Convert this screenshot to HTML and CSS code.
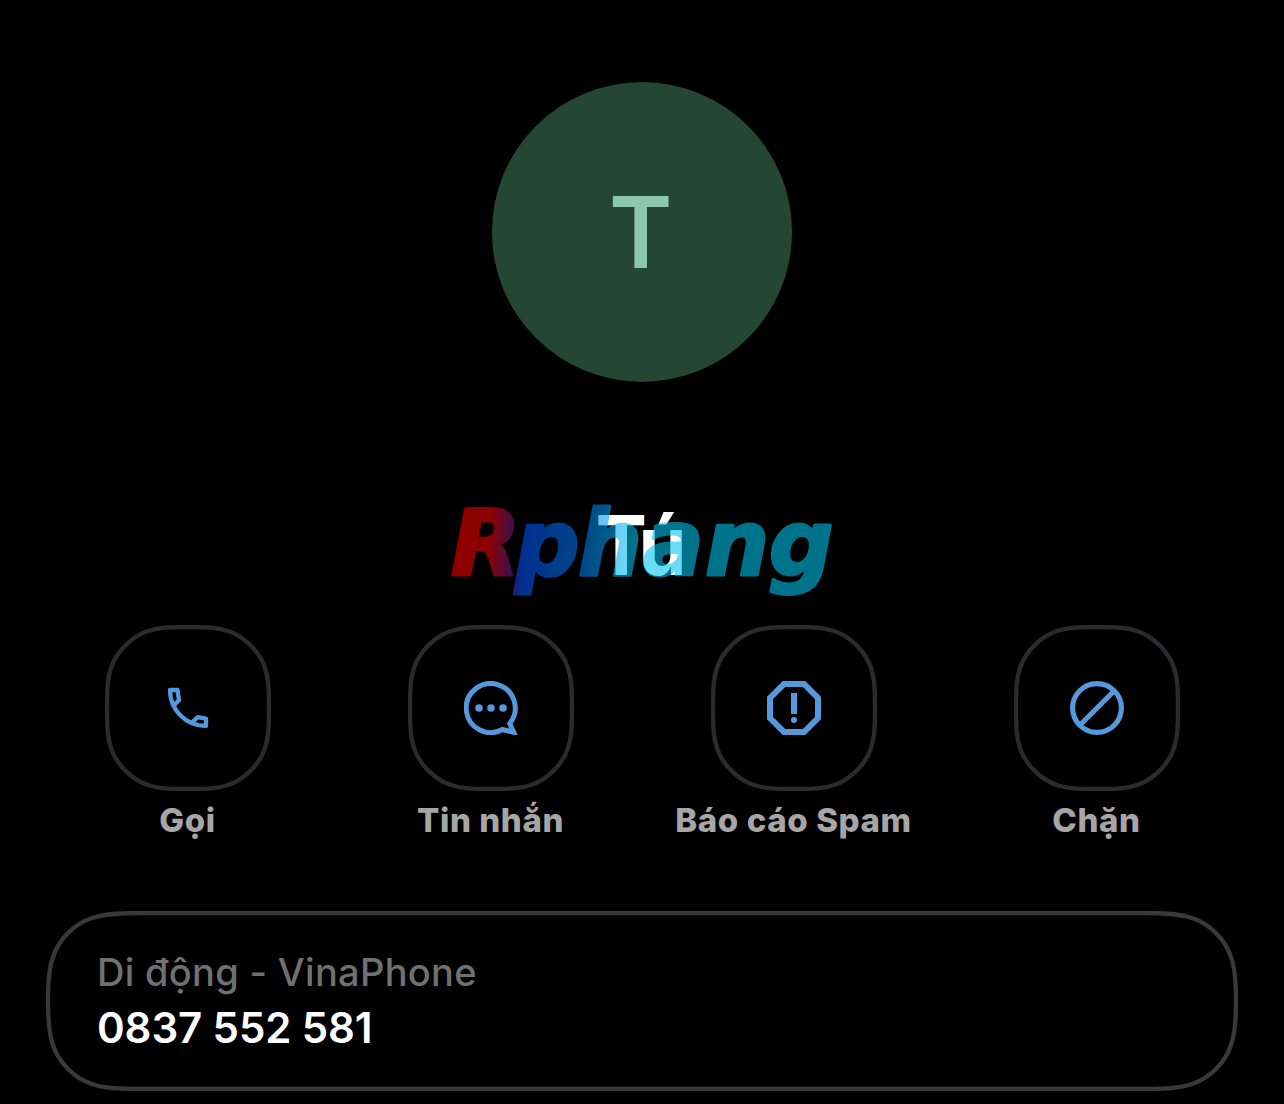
FILE: index.html
```html
<!DOCTYPE html>
<html lang="vi">
<head>
    <meta charset="utf-8">
    <title>Tú</title>
    <link rel="stylesheet" href="styles.css">
</head>

<body>
    <svg width="0" height="0" class="defs">
        <symbol id="frame" viewBox="0 0 166 166">
            <path d="M83 2C106 2 114 3 123 6C139 11 155 27 160 43C163 52 164 60 164 83C164 106 163 114 160 123C155 139 139 155 123 160C114 163 106 164 83 164C60 164 52 163 43 160C27 155 11 139 6 123C3 114 2 106 2 83C2 60 3 52 6 43C11 27 27 11 43 6C52 3 60 2 83 2Z"/>
        </symbol>
    </svg>

    <div class="contact">
        <div class="avatar"><span>T</span></div>

        <div class="name-area">
            <h1 class="name">Tú</h1>
            <svg class="watermark" width="400" height="110" viewBox="0 0 400 110">
                <defs>
                    <linearGradient id="brand" gradientUnits="userSpaceOnUse" x1="10" y1="40" x2="390" y2="70">
                        <stop offset="0" stop-color="#f40000"/>
                        <stop offset="0.1" stop-color="#f40000"/>
                        <stop offset="0.17" stop-color="#5a1e9c"/>
                        <stop offset="0.19" stop-color="#0053f8"/>
                        <stop offset="0.34" stop-color="#0078ec"/>
                        <stop offset="0.48" stop-color="#00c6f1"/>
                        <stop offset="1" stop-color="#00c6f1"/>
                    </linearGradient>
                </defs>
                <text x="9 73 136 201 263 327" y="82.500" fill="url(#brand)" stroke="url(#brand)">Rphang</text>
            </svg>
        </div>

        <div class="actions">
            <div class="action">
                <div class="action-button">
                    <svg class="frame"><use href="#frame"/></svg>
                    <svg class="icon" width="54" height="54" viewBox="0 0 54 54">
                        <path class="line" stroke-width="4.300" stroke-linejoin="round" d="M12 25.300L18 19L16.500 9H9C9 29 25 45 45 45V37.600L36.500 36.200L30.500 42"/>
                    </svg>
                </div>
                <span class="label">Gọi</span>
            </div>
            <div class="action">
                <div class="action-button">
                    <svg class="frame"><use href="#frame"/></svg>
                    <svg class="icon" width="54" height="54" viewBox="0 0 54 54">
                        <path class="line" stroke-width="5" d="M38.500 48.500A24.500 24.500 0 1 1 45.700 42.500L49.600 51.200Z"/>
                        <circle class="dot" cx="15" cy="27" r="3.800"/>
                        <circle class="dot" cx="27" cy="27" r="3.800"/>
                        <circle class="dot" cx="39" cy="27" r="3.800"/>
                    </svg>
                </div>
                <span class="label">Tin nhắn</span>
            </div>
            <div class="action">
                <div class="action-button">
                    <svg class="frame"><use href="#frame"/></svg>
                    <svg class="icon" width="54" height="54" viewBox="0 0 54 54">
                        <path class="line" stroke-width="6" d="M17 3H37L51 17V37L37 51H17L3 37V17Z"/>
                        <path class="line" stroke-width="6" d="M27 12V33"/>
                        <circle class="dot" cx="27" cy="39" r="3"/>
                    </svg>
                </div>
                <span class="label">Báo cáo Spam</span>
            </div>
            <div class="action">
                <div class="action-button">
                    <svg class="frame"><use href="#frame"/></svg>
                    <svg class="icon" width="54" height="54" viewBox="0 0 54 54">
                        <circle class="line" stroke-width="5.200" cx="27" cy="27" r="24.400"/>
                        <path class="line" stroke-width="5.200" d="M10 44L44 10"/>
                    </svg>
                </div>
                <span class="label">Chặn</span>
            </div>
        </div>

        <div class="card">
            <svg class="card-frame" width="1192" height="180" viewBox="0 0 1192 180">
                <path d="M96 2H1096C1128 2 1138 4 1146 7C1164 13 1179 28 1185 46C1188 54 1190 64 1190 90C1190 116 1188 126 1185 134C1179 152 1164 167 1146 173C1138 176 1128 178 1096 178H96C64 178 54 176 46 173C28 167 13 152 7 134C4 126 2 116 2 90C2 64 4 54 7 46C13 28 28 13 46 7C54 4 64 2 96 2Z"/>
            </svg>
            <div class="carrier">Di động - VinaPhone</div>
            <div class="phone">0837 552 581</div>
        </div>
    </div>
</body>
</html>
```
FILE: styles.css
```css
* {
    box-sizing: border-box;
}

body {
    margin: 0;
    background: #000;
    color: #fff;
    font-family: Inter, "Liberation Sans", sans-serif;
}

.defs {
    display: block;
}

.contact {
    height: 1104px;
    padding-top: 82px;
    overflow: hidden;
    display: flex;
    flex-direction: column;
    align-items: center;
}

.avatar {
    width: 300px;
    height: 300px;
    padding-right: 2px;
    border-radius: 50%;
    background: #244734;
    color: #8cc8ab;
    display: flex;
    align-items: center;
    justify-content: center;
    font-size: 99px;
    font-weight: 600;
    line-height: 1;
}

.avatar span {
    transform: scaleX(0.97);
}

.name-area {
    position: relative;
    width: 400px;
    height: 110px;
    margin-top: 110px;
}

.name {
    margin: 0;
    padding: 8px 5px 0 0;
    text-align: center;
    font-size: 82px;
    font-weight: 700;
    line-height: 92px;
    letter-spacing: -3px;
    transform: scaleX(0.94);
}

.watermark {
    position: absolute;
    left: 0;
    top: 0;
    opacity: 0.58;
    overflow: visible;
    font-family: "DejaVu Sans", sans-serif;
    font-size: 90px;
    font-weight: 700;
    font-style: italic;
    stroke-width: 3px;
    stroke-linejoin: round;
}

.actions {
    width: 1212px;
    margin-top: 23px;
    margin-left: 1px;
    display: grid;
    grid-template-columns: repeat(4, 1fr);
}

.action {
    display: flex;
    flex-direction: column;
    align-items: center;
}

.action-button {
    width: 166px;
    height: 166px;
    display: grid;
    place-items: center;
}

.frame,
.icon {
    grid-area: 1 / 1;
}

.frame {
    width: 166px;
    height: 166px;
    fill: none;
    stroke: #2b2b2d;
    stroke-width: 4.300;
}

.line {
    fill: none;
    stroke: #5599dd;
    stroke-miterlimit: 8;
}

.dot {
    fill: #5599dd;
}

.label {
    margin-top: 7px;
    margin-right: 1px;
    color: #a6a6a6;
    font-size: 33px;
    font-weight: 800;
    line-height: 44px;
    letter-spacing: 0.600px;
    white-space: nowrap;
}

.card {
    position: relative;
    width: 1192px;
    height: 180px;
    margin-top: 69px;
    padding: 37px 51px;
}

.card-frame {
    position: absolute;
    left: 0;
    top: 0;
    fill: none;
    stroke: #39393b;
    stroke-width: 4.300;
}

.carrier {
    color: #707070;
    font-size: 38px;
    font-weight: 550;
    line-height: 48px;
    letter-spacing: 0.300px;
}

.phone {
    margin-top: 5px;
    font-size: 42px;
    font-weight: 600;
    line-height: 54px;
    letter-spacing: -0.100px;
}
```
